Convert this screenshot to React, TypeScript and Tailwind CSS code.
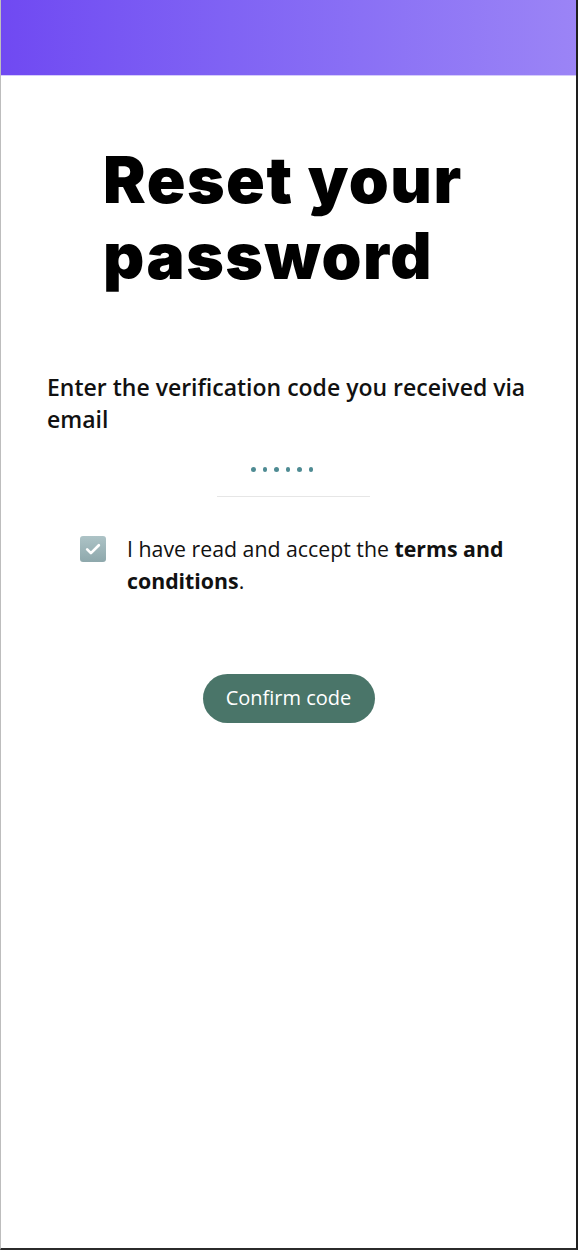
import React from 'react';

const BODY_FONT = { fontFamily: '"Open Sans", "Liberation Sans", sans-serif' };

export default function App() {
  return (
    <div className="flex h-[1250px] w-[578px] flex-col border-b-2 border-l border-r-2 border-b-[#2b2b2b] border-l-[#bdbdbd] border-r-[#1e1e1e] bg-white">
      <header className="h-[76px] shrink-0 border-b border-[#d5cbfb] bg-gradient-to-r from-[#7049f2] to-[#9b84f6]" />

      <main className="flex flex-col">
        <h1 className="mt-[66px] pl-[102px] font-['Inter',sans-serif] text-[64px] font-black leading-[76px] tracking-[1.5px] text-black">
          Reset your
          <br />
          password
        </h1>

        <p
          className="mt-[77px] pl-[46px] pr-[40px] text-[23px] font-semibold leading-[32px] text-[#111]"
          style={BODY_FONT}
        >
          Enter the verification code you received via email
        </p>

        <div className="mt-[32px] ml-[216px] w-[153px] border-b border-[#e6e6e6] pb-[24px] pl-[34px]">
          <div className="flex gap-[7px]">
            {Array.from({ length: 6 }).map((_, i) => (
              <span key={i} className="h-[4.5px] w-[4.5px] rounded-full bg-[#4e8b93]" />
            ))}
          </div>
        </div>

        <label className="mt-[36px] flex items-start gap-[21px] pl-[79px] pr-[50px]">
          <span className="mt-[3px] flex h-[26px] w-[26px] shrink-0 items-center justify-center rounded-[3px] bg-gradient-to-b from-[#adc3c6] to-[#8ea8ac]">
            <svg viewBox="0 0 24 24" className="h-[20px] w-[20px]" fill="none" stroke="white" strokeWidth="3.2" strokeLinecap="round" strokeLinejoin="round">
              <path d="M5 12.5l4.5 4.5L19 7.5" />
            </svg>
          </span>
          <span className="text-[21.3px] leading-[32px] text-[#111]" style={BODY_FONT}>
            I have read and accept the <strong className="font-bold">terms and conditions</strong>.
          </span>
        </label>

        <div className="mt-[77px] flex justify-center">
          <button
            type="button"
            className="h-[49px] w-[172px] rounded-full bg-[#4a7569] text-[20px] text-white"
            style={BODY_FONT}
          >
            Confirm code
          </button>
        </div>
      </main>
    </div>
  );
}
